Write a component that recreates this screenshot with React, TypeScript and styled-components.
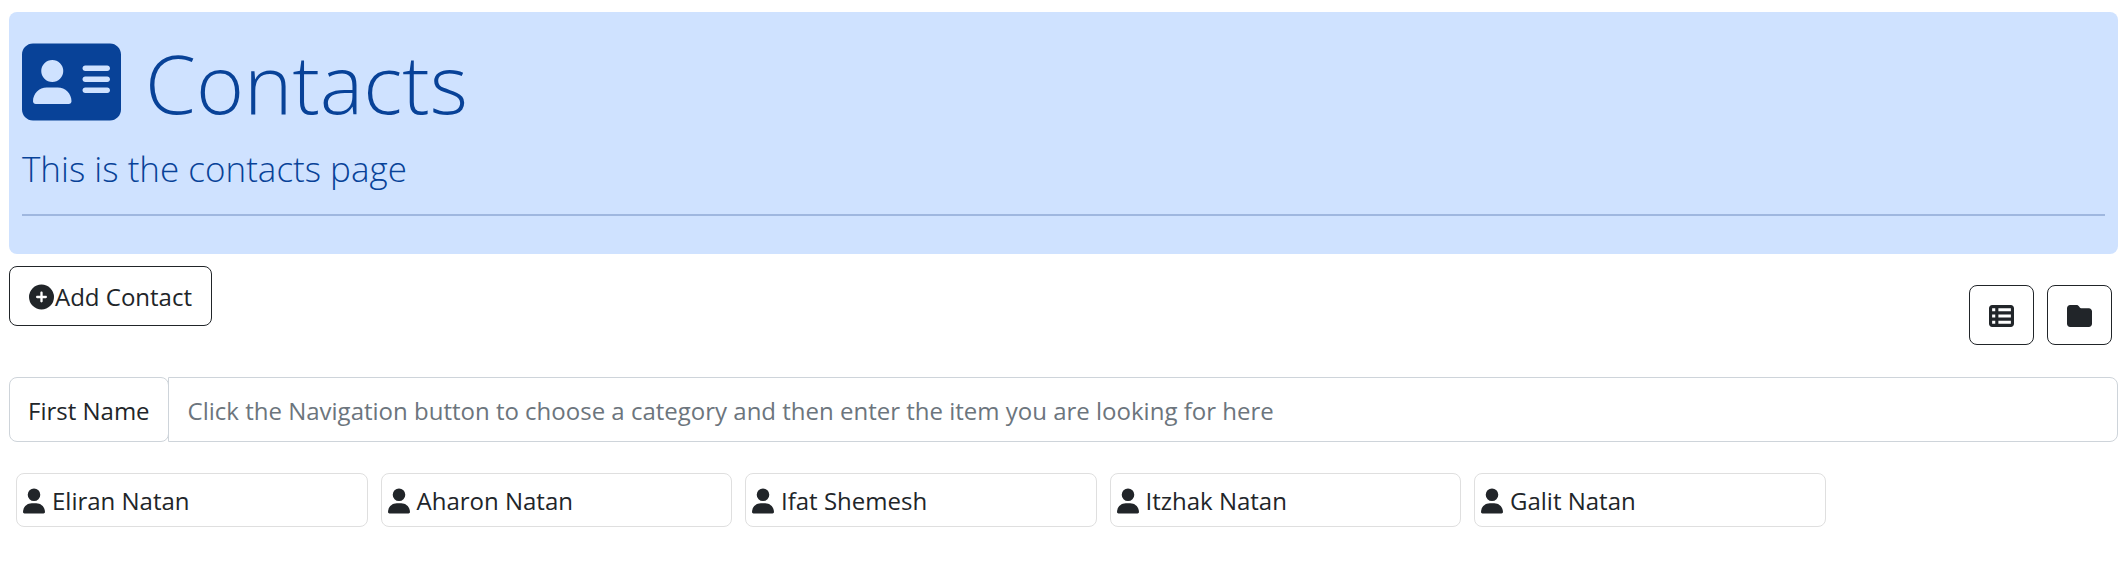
import React from 'react';
import styled, { createGlobalStyle } from 'styled-components';
import { FaAddressCard, FaCirclePlus, FaFolder, FaTableList, FaUser } from 'react-icons/fa6';

const GlobalStyle = createGlobalStyle`
  *, *::before, *::after { box-sizing: border-box; }
  body {
    margin: 0;
    background: #fff;
    color: #212529;
    font-family: "Open Sans", "Noto Sans", sans-serif;
    font-size: 24px;
    line-height: 38px;
  }
  button, input { font: inherit; color: inherit; }
`;

const Icon = styled.span<{ $width: number; $height: number }>`
  display: flex;
  flex: none;
  svg {
    width: ${({ $width }) => $width}px;
    height: ${({ $height }) => $height}px;
  }
`;

const Page = styled.main`
  padding: 12px 2px 12px 9px;
`;

const Banner = styled.header`
  padding: 26px 13px 38px;
  border-radius: 8px;
  background: #cfe2ff;
  color: #084298;
`;

const Title = styled.h1`
  display: flex;
  align-items: center;
  gap: 24px;
  margin: 0;
  font-size: 82px;
  font-weight: 300;
  line-height: 88px;
`;

const Subtitle = styled.p`
  margin: 15px 0 0;
  font-size: 35px;
  font-weight: 300;
  line-height: 56px;
`;

const Divider = styled.hr`
  height: 2px;
  margin: 17px 0 0;
  border: 0;
  background: #9fb7df;
`;

const Toolbar = styled.div`
  display: flex;
  justify-content: space-between;
  align-items: flex-start;
  padding-top: 12px;
`;

const OutlineButton = styled.button`
  display: flex;
  align-items: center;
  gap: 1px;
  height: 60px;
  padding: 2px 19px 0;
  border: 1px solid #212529;
  border-radius: 8px;
  background: #fff;
  cursor: pointer;
`;

const ViewSwitch = styled.div`
  display: flex;
  gap: 13px;
  padding: 19px 6px 0 0;
`;

const SearchRow = styled.div`
  display: flex;
  margin-top: 32px;
`;

const FieldLabel = styled.label`
  padding: 14px 18px 11px;
  border: 1px solid #ced4da;
  border-radius: 8px;
  white-space: nowrap;
`;

const SearchInput = styled.input`
  flex: 1;
  min-width: 0;
  height: 65px;
  margin-left: -1px;
  padding: 2px 19px 0;
  border: 1px solid #ced4da;
  border-radius: 0 8px 8px 0;
  background: #fff;
  &::placeholder { color: #6c757d; opacity: 1; }
`;

const ContactList = styled.ul`
  display: flex;
  flex-wrap: wrap;
  row-gap: 13px;
  margin: 31px 0 0;
  padding: 0;
  list-style: none;
`;

const ContactCard = styled.li`
  display: flex;
  align-items: center;
  gap: 7px;
  width: calc(100% / 6);
  margin: 0 6px 0 7px;
  padding: 8px 6px 6px;
  border: 1px solid #dfdfdf;
  border-radius: 8px;
`;

const contacts = ['Eliran Natan', 'Aharon Natan', 'Ifat Shemesh', 'Itzhak Natan', 'Galit Natan'];

export default function App() {
  return (
    <Page>
      <GlobalStyle />
      <Banner>
        <Title>
          <Icon $width={99} $height={88}><FaAddressCard /></Icon>
          Contacts
        </Title>
        <Subtitle>This is the contacts page</Subtitle>
        <Divider />
      </Banner>
      <Toolbar>
        <OutlineButton type="button">
          <Icon $width={25} $height={26}><FaCirclePlus /></Icon>
          Add Contact
        </OutlineButton>
        <ViewSwitch>
          <OutlineButton type="button" aria-label="Table view">
            <Icon $width={25} $height={26}><FaTableList /></Icon>
          </OutlineButton>
          <OutlineButton type="button" aria-label="Folder view">
            <Icon $width={25} $height={26}><FaFolder /></Icon>
          </OutlineButton>
        </ViewSwitch>
      </Toolbar>
      <SearchRow>
        <FieldLabel htmlFor="contact-search">First Name</FieldLabel>
        <SearchInput
          id="contact-search"
          type="text"
          placeholder="Click the Navigation button to choose a category and then enter the item you are looking for here"
        />
      </SearchRow>
      <ContactList>
        {contacts.map((name) => (
          <ContactCard key={name}>
            <Icon $width={22} $height={26}><FaUser /></Icon>
            {name}
          </ContactCard>
        ))}
      </ContactList>
    </Page>
  );
}
